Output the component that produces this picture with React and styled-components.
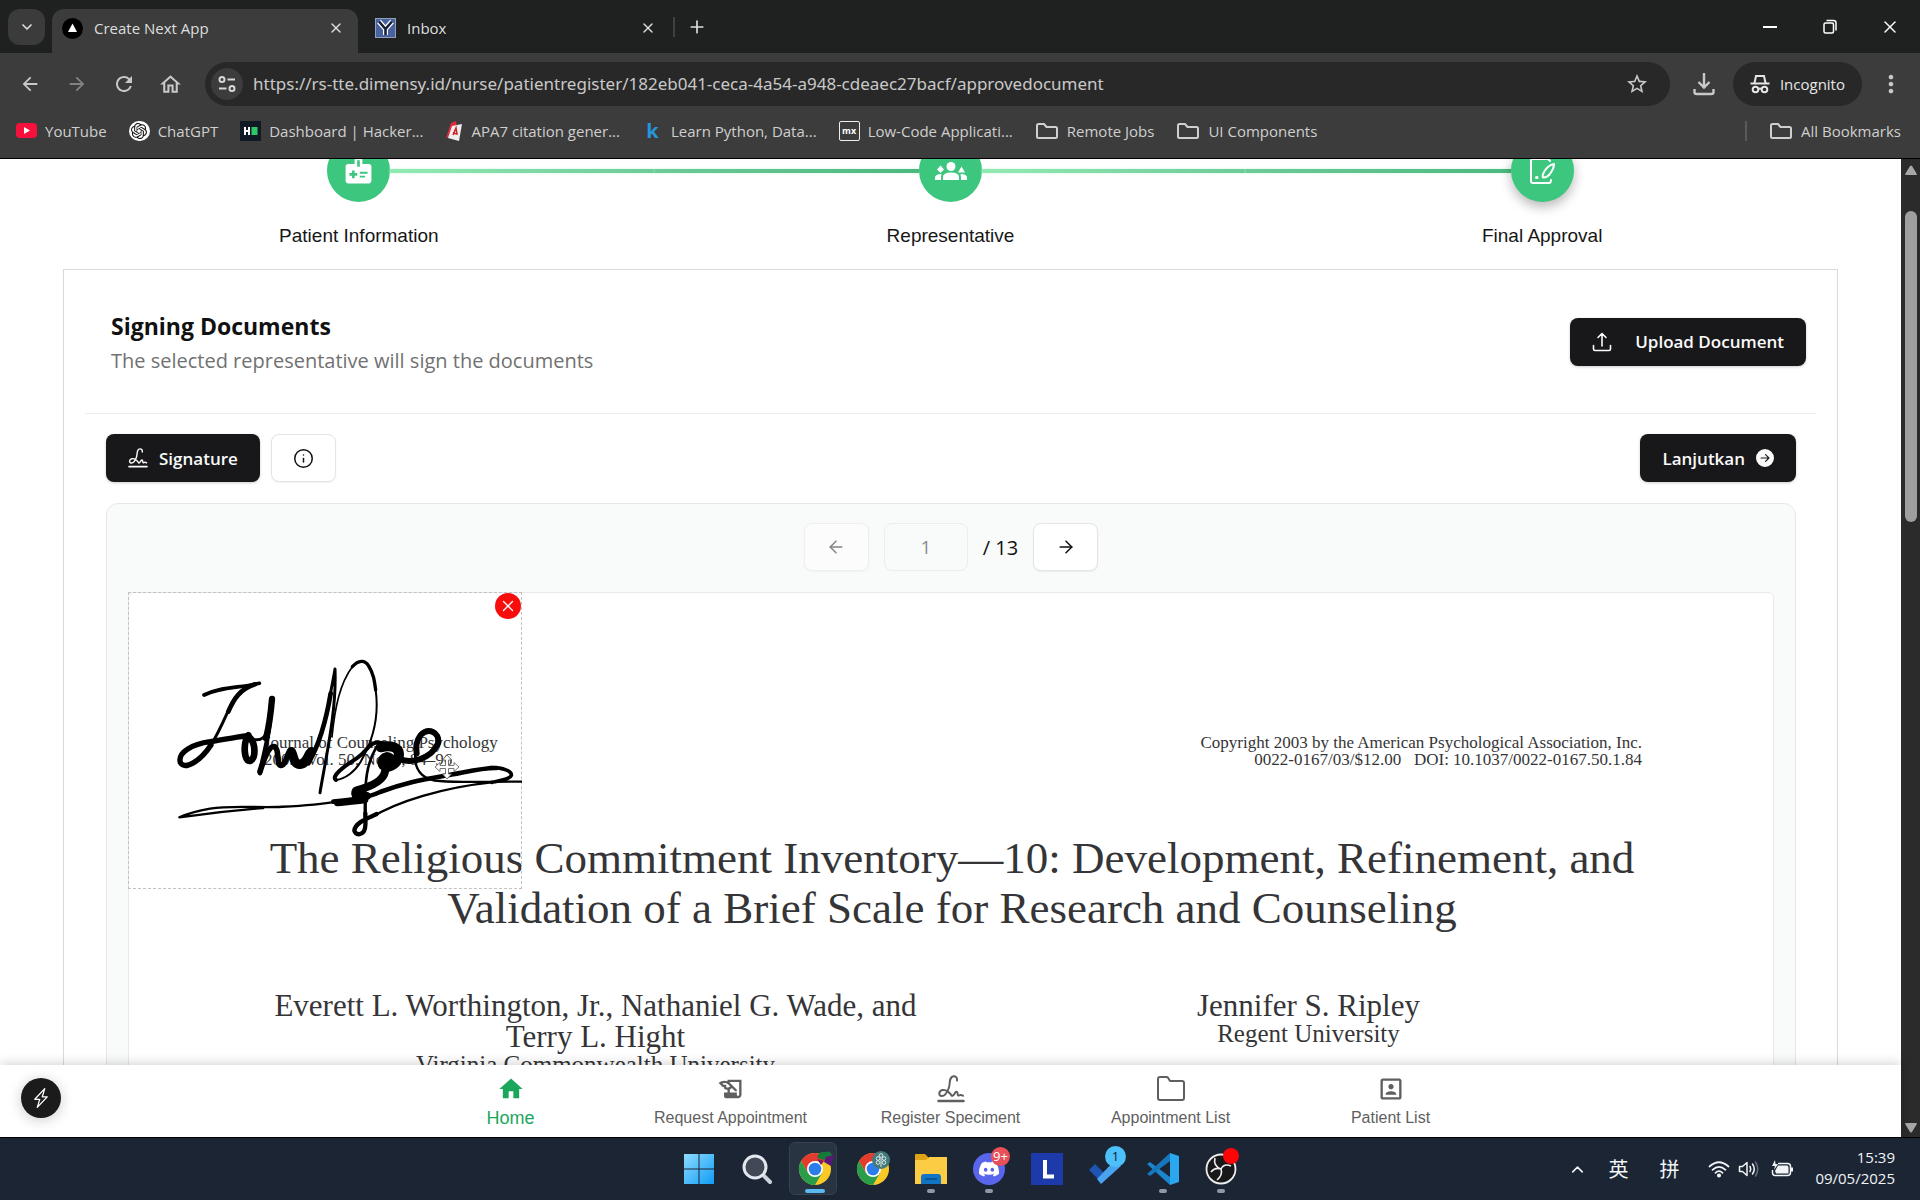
import React from "react";
import styled, { createGlobalStyle, css } from "styled-components";
import {
  MdArrowBack, MdArrowForward, MdRefresh, MdOutlineHome, MdStarBorder, MdMoreVert,
  MdMedicalInformation, MdHome, MdHistoryEdu, MdPortrait,
} from "react-icons/md";
import { BsArrowRightCircleFill, BsLightningCharge } from "react-icons/bs";
import { SiOpenai, SiDiscord } from "react-icons/si";
import { ArrowLeft, ArrowRight, Info, ChevronDown, ChevronUp, X, Plus } from "lucide-react";

const ui = `"Open Sans", "Noto Sans", "Noto Sans CJK SC", sans-serif`;
const arial = `"Liberation Sans", Arial, sans-serif`;
const serif = `"Liberation Serif", "Times New Roman", serif`;

const GlobalStyle = createGlobalStyle`
  *, *::before, *::after { box-sizing: border-box; }
  body { margin: 0; background: #1b2533; font-family: ${ui}; }
  button, input { font: inherit; color: inherit; margin: 0; padding: 0; border: 0; background: none; }
  button { cursor: pointer; }
  a { color: inherit; text-decoration: none; }
  svg { display: block; flex: none; }
  h1, h2, p { margin: 0; font-weight: 400; }
`;

const Screen = styled.div`
  display: flex;
  flex-direction: column;
  height: 100vh;
  overflow: hidden;
`;

/* Browser chrome */

const TabStrip = styled.div`
  display: flex;
  align-items: flex-end;
  height: 53px;
  flex: none;
  padding-left: 8px;
  background: #1f2020;
  color: #dedede;
`;

const TabSearch = styled.button`
  display: grid;
  place-items: center;
  width: 37px;
  height: 36px;
  margin: 0 7px 8px 0;
  border-radius: 12px;
  background: #3b3b3b;
`;

const Tab = styled.div`
  display: flex;
  align-items: center;
  gap: 11px;
  width: ${(p) => (p.$active ? 306 : 315)}px;
  height: 44px;
  padding: 0 ${(p) => (p.$active ? 14 : 17)}px 6px ${(p) => (p.$active ? 10 : 17)}px;
  border-radius: 12px 12px 0 0;
  background: ${(p) => (p.$active ? "#3c3c3c" : "transparent")};
  font-size: 15px;
`;

const TabTitle = styled.span`
  flex: 1;
`;

const StripButton = styled.button`
  display: grid;
  place-items: center;
  width: ${(p) => p.$width || 16}px;
  height: ${(p) => p.$height || 16}px;
`;

const StripRule = styled.span`
  width: 2px;
  height: 20px;
  margin: 0 12px 16px 0;
  background: #3f4141;
`;

const NewTab = styled(StripButton)`
  margin-bottom: 13px;
`;

const WindowControls = styled.div`
  display: flex;
  margin-left: auto;
  align-self: stretch;
`;

const ToolBar = styled.div`
  display: flex;
  align-items: center;
  height: 62px;
  flex: none;
  padding: 0 8px 0 6px;
  background: #3c3c3c;
  color: #c8c8c8;
`;

const ToolButton = styled.button`
  display: grid;
  place-items: center;
  width: ${(p) => p.$width || 47}px;
  height: 40px;
  opacity: ${(p) => (p.$dim ? 0.5 : 1)};
`;

const Address = styled.div`
  display: flex;
  align-items: center;
  flex: 1;
  height: 44px;
  margin: 0 8px 0 11px;
  padding: 0 18px 0 6px;
  border-radius: 22px;
  background: #282828;
`;

const SiteInfo = styled.button`
  display: grid;
  place-items: center;
  width: 32px;
  height: 32px;
  margin-right: 10px;
  border-radius: 50%;
  background: #3c3c3c;
`;

const Url = styled.input`
  flex: 1;
  min-width: 0;
  font-family: "Noto Sans", "Open Sans", sans-serif;
  font-size: 17px;
  line-height: 26px;
`;

const Incognito = styled.button`
  display: flex;
  align-items: center;
  gap: 10px;
  height: 44px;
  padding: 0 17px;
  margin: 0 8px 0 3px;
  border-radius: 22px;
  background: #282828;
  color: #e6e6e6;
  font-size: 15px;
`;

const Bookmarks = styled.nav`
  display: flex;
  align-items: center;
  gap: 22px;
  flex: none;
  height: 44px;
  padding: 0 19px 12px 16px;
  border-bottom: 1px solid #000;
  background: #3c3c3c;
  color: #cfcfcf;
  font-size: 15px;
`;

const Bookmark = styled.a`
  display: flex;
  align-items: center;
  gap: 8px;
  white-space: nowrap;
`;

const BookmarkRule = styled.span`
  width: 2px;
  height: 20px;
  margin-left: auto;
  background: #5a5a5a;
`;

const Tile = styled.span`
  display: grid;
  place-items: center;
  width: 21px;
  height: 20px;
  background: ${(p) => p.$bg || "transparent"};
  border: ${(p) => p.$border || "0"};
  border-radius: ${(p) => p.$radius || 0}px;
  color: ${(p) => p.$color || "#fff"};
  font: 700 ${(p) => p.$size || 10}px/1 ${ui};
`;

/* Page */

const Window = styled.div`
  display: flex;
  flex: 1;
  min-height: 0;
  border-bottom: 1px solid #000;
`;

const Page = styled.div`
  position: relative;
  display: flex;
  flex-direction: column;
  flex: 1;
  min-width: 0;
  background: #fff;
`;

const Scroller = styled.main`
  flex: 1;
  min-height: 0;
  overflow: hidden;
`;

const ScrollBar = styled.div`
  display: flex;
  flex-direction: column;
  align-items: center;
  justify-content: space-between;
  width: 19px;
  padding: 6px 0 4px;
  background: #2b2b2b;
`;

const Track = styled.div`
  flex: 1;
  padding: 35px 0 0 0;
`;

const Thumb = styled.div`
  width: 12px;
  height: 311px;
  border-radius: 6px;
  background: #9f9f9f;
`;

const Stepper = styled.ol`
  display: flex;
  margin: -20px 63px 0;
  padding: 0;
  list-style: none;
`;

const Step = styled.li`
  display: grid;
  grid-template-columns: 1fr 63px 1fr;
  align-items: center;
  flex: 1;
  row-gap: 22px;
`;

const StepLine = styled.span`
  height: 4px;
  background: ${(p) =>
    p.$part === "start" ? "linear-gradient(90deg, #93eab4, #6dcb97)" :
    p.$part === "end" ? "linear-gradient(90deg, #6dcb97, #4cb87e)" : "none"};
  box-shadow: ${(p) => (p.$part ? "0 0 3px #c9f7da" : "none")};
`;

const StepDot = styled.span`
  display: grid;
  place-items: center;
  height: 63px;
  border-radius: 50%;
  background: #3cc67e;
  color: #fff;
  ${(p) => p.$current && css`box-shadow: 0 5px 12px rgba(0, 0, 0, 0.28);`}
`;

const StepLabel = styled.span`
  grid-column: 1 / -1;
  text-align: center;
  font: 19px/24px ${arial};
  color: #161616;
`;

const Card = styled.section`
  margin: 21px 63px 0;
  padding: 0 21px;
  border: 1px solid #dadada;
`;

const CardHeader = styled.header`
  display: flex;
  align-items: center;
  justify-content: space-between;
  height: 144px;
  padding: 0 10px 0 26px;
  border-bottom: 1px solid #ececec;
`;

const CardHeading = styled.div`
  padding-top: 2px;
`;

const CardTitle = styled.h1`
  font-size: 23px;
  font-weight: 700;
  line-height: 36px;
  color: #111;
`;

const CardText = styled.p`
  font-size: 20px;
  line-height: 34px;
  color: #717171;
`;

const CardBody = styled.div`
  padding: 20px 20px 0 21px;
`;

const Actions = styled.div`
  display: flex;
  gap: 11px;
  margin-bottom: 21px;
`;

const Button = styled.button`
  display: flex;
  align-items: center;
  justify-content: center;
  gap: ${(p) => p.$gap || 11}px;
  height: 48px;
  padding: 0 22px;
  border-radius: 8px;
  background: #18181a;
  color: #fafafa;
  font-size: 17px;
  font-weight: 600;
  box-shadow: 0 1px 3px rgba(0, 0, 0, 0.2);
  margin-left: ${(p) => (p.$end ? "auto" : "0")};
`;

const IconButton = styled.button`
  display: grid;
  place-items: center;
  width: 65px;
  height: 48px;
  border: 1px solid #e4e4e4;
  border-radius: 8px;
  background: #fff;
  color: #111;
  box-shadow: 0 1px 2px rgba(0, 0, 0, 0.06);
  &:disabled { opacity: 0.5; }
`;

const Viewer = styled.div`
  padding: 19px 21px 0;
  border: 1px solid #e6e8e8;
  border-radius: 12px 12px 0 0;
  background: #f9fafa;
`;

const Pager = styled.div`
  display: flex;
  align-items: center;
  justify-content: center;
  gap: 15px;
  margin-bottom: 21px;
  font-size: 20px;
  color: #111;
`;

const PageInput = styled.input`
  width: 84px;
  height: 48px;
  border: 1px solid #ededed;
  border-radius: 8px;
  text-align: center;
  font-size: 18px;
  color: #888;
`;

const Paper = styled.article`
  position: relative;
  min-height: 1200px;
  padding: 141px 0 0 2px;
  border: 1px solid #e8eaea;
  border-radius: 6px;
  background: #fff;
  color: #353537;
  font-family: ${serif};
`;

const Masthead = styled.div`
  display: flex;
  justify-content: space-between;
  padding: 0 131px 0 133px;
  font-size: 17px;
  line-height: 17px;
  p:last-child { text-align: right; }
`;

const PaperTitle = styled.h2`
  margin-top: 65px;
  text-align: center;
  font-size: 45px;
  line-height: 50px;
`;

const Authors = styled.div`
  display: grid;
  grid-template-columns: 1fr 1fr;
  margin-top: 57px;
  padding: 0 108px;
  text-align: center;
`;

const AuthorName = styled.p`
  font-size: 31px;
  line-height: 31px;
  white-space: nowrap;
`;

const Affiliation = styled.p`
  font-size: 25px;
  line-height: 26px;
`;

const SignatureBox = styled.div`
  position: absolute;
  top: -1px;
  left: -1px;
  width: 394px;
  height: 297px;
  border: 1px dashed #c2c2c2;
`;

const RemoveSignature = styled.button`
  position: absolute;
  top: 0;
  right: 0;
  display: grid;
  place-items: center;
  width: 26px;
  height: 26px;
  border-radius: 50%;
  background: #f80d0d;
  color: #fff;
`;

const BottomNav = styled.nav`
  position: relative;
  display: flex;
  justify-content: center;
  height: 72px;
  flex: none;
  background: #fff;
  box-shadow: 0 -2px 10px rgba(0, 0, 0, 0.16);
`;

const NavLink = styled.a`
  display: flex;
  flex-direction: column;
  align-items: center;
  gap: 3px;
  width: 220px;
  padding-top: 10px;
  font: ${(p) => (p.$active ? 18 : 16)}px/24px ${arial};
  color: ${(p) => (p.$active ? "#1aa75c" : "#5f5f5f")};
`;

const DevBadge = styled.button`
  position: absolute;
  left: 21px;
  bottom: 19px;
  display: grid;
  place-items: center;
  width: 40px;
  height: 40px;
  border-radius: 50%;
  background: #1b1b1b;
  color: #fff;
  box-shadow: 0 2px 14px rgba(0, 0, 0, 0.2);
`;

/* Taskbar */

const TaskBar = styled.footer`
  display: grid;
  grid-template-columns: 1fr auto 1fr;
  align-items: center;
  flex: none;
  height: 62px;
  background: #1b2534;
  color: #f2f4f6;
`;

const Apps = styled.div`
  grid-column: 2;
  display: flex;
`;

const AppButton = styled.button`
  position: relative;
  display: grid;
  place-items: center;
  width: 58px;
  height: 62px;
  &::before {
    content: "";
    position: absolute;
    inset: 4px 7px 5px 3px;
    border-radius: 6px;
    background: ${(p) => (p.$active ? "#293443" : "none")};
    border: 1px solid ${(p) => (p.$active ? "#354050" : "transparent")};
  }
  &::after {
    content: "";
    position: absolute;
    bottom: 7px;
    left: 50%;
    width: ${(p) => (p.$active ? 20 : 8)}px;
    height: 4px;
    border-radius: 2px;
    transform: translateX(-50%);
    background: ${(p) => (p.$active ? "#5ab9f0" : p.$open ? "#8f99a6" : "none")};
  }
  svg { position: relative; }
`;

const Badge = styled.span`
  position: absolute;
  top: ${(p) => p.$top || 8}px;
  right: ${(p) => p.$right || 6}px;
  display: grid;
  place-items: center;
  width: ${(p) => p.$size || 19}px;
  height: ${(p) => p.$size || 19}px;
  border-radius: 50%;
  background: ${(p) => p.$bg};
  color: ${(p) => p.$color || "#fff"};
  font: 13px/1 ${ui};
`;

const Tray = styled.div`
  display: flex;
  align-items: center;
  justify-content: flex-end;
  padding-right: 25px;
`;

const TrayButton = styled.button`
  display: grid;
  place-items: center;
  width: ${(p) => p.$width}px;
  height: 40px;
  font: 20px/40px "Noto Sans CJK SC", sans-serif;
`;

const Clock = styled.time`
  margin-left: 16px;
  padding-bottom: 2px;
  text-align: right;
  font-size: 15px;
  line-height: 21px;
`;

/* Drawings */

const Folder = ({ size = 24 }) => (
  <svg width={size} height={size} viewBox="0 0 24 24" fill="none" stroke="currentColor" strokeWidth="2" strokeLinejoin="round">
    <path d="M2 6.500Q2 5 3.500 5H9l2.500 3H20.500Q22 8 22 9.500V17.500Q22 19 20.500 19H3.500Q2 19 2 17.500Z" />
  </svg>
);

const NavFolder = () => (
  <svg width="30" height="28" viewBox="0 0 30 28" fill="none" stroke="currentColor" strokeWidth="2" strokeLinejoin="round">
    <path d="M2 4Q2 2 4 2H10.500Q11.500 2 12.200 3L14 6H26Q28 6 28 8V23Q28 25 26 25H4Q2 25 2 23Z" />
  </svg>
);

const SignIcon = ({ size = 28 }) => (
  <svg width={size} height={size} viewBox="0 0 28 28" fill="none" stroke="currentColor" strokeWidth="2" strokeLinecap="round" strokeLinejoin="round">
    <path d="M20 5.500C20.500 2.500 18.500 1 16.500 1.200C11.500 2 13.500 8.500 11.800 13C10 18 7 21.500 4 21C1.500 20 1.500 16 5.500 15C10.500 14.200 13 18 15 21C17.500 21 17.500 16.800 19.500 16.800C21.500 17 19.800 20.800 21.800 20.600C23.500 20.200 23.500 19 26 20.800" />
    <path d="M1.500 26H26.500" strokeWidth="2.500" />
  </svg>
);

const UploadIcon = () => (
  <svg width="20" height="20" viewBox="0 0 20 20" fill="none" stroke="currentColor" strokeWidth="1.600" strokeLinecap="round" strokeLinejoin="round">
    <path d="M10 14V2M6 5.500L10 1.500L14 5.500M1.500 13.500V17Q1.500 18.500 3 18.500H17Q18.500 18.500 18.500 17V13.500" />
  </svg>
);

const GroupIcon = () => (
  <svg width="34" height="34" viewBox="0 0 34 34" fill="currentColor">
    <circle cx="17" cy="12.500" r="4.500" />
    <path d="M9 26V23Q9 18.500 17 18.500Q25 18.500 25 23V26ZM1 26V23.500Q1 20 7.500 20Q7 22 7 26ZM33 26V23.500Q33 20 26.500 20Q27 22 27 26ZM6.500 11.500L10 15.500L6.500 19L3 15.500ZM27.500 12.500L31 18.500H24Z" />
  </svg>
);

const SignPageIcon = () => (
  <svg width="30" height="30" viewBox="0 0 30 30" fill="none" stroke="currentColor" strokeWidth="2" strokeLinecap="round" strokeLinejoin="round">
    <path d="M19 3H6Q4 3 4 5V25Q4 27 6 27H22Q24 27 24 24" />
    <path d="M27 8Q21 9 17 16Q15 19.500 16 21.500Q19 22 22 19Q27 13 27 8ZM20 2L23 5" />
    <path d="M9.500 21.500H10" strokeWidth="3" />
  </svg>
);

const SiteIcon = () => (
  <svg width="18" height="18" viewBox="0 0 18 18" fill="none" stroke="#d8d8d8" strokeWidth="2">
    <circle cx="4" cy="4.500" r="2.500" />
    <path d="M9.500 4.500H17M1 13.500H8.500" />
    <circle cx="14" cy="13.500" r="2.500" />
  </svg>
);

const IncognitoIcon = () => (
  <svg width="20" height="20" viewBox="0 0 20 20" fill="none" stroke="currentColor" strokeWidth="2">
    <path d="M0.500 9.500H19.500M4.500 9L6 2H14L15.500 9" />
    <circle cx="5.500" cy="15.500" r="2.800" />
    <circle cx="14.500" cy="15.500" r="2.800" />
    <path d="M8 15Q10 14 12 15" />
  </svg>
);

const DownloadIcon = () => (
  <svg width="22" height="24" viewBox="0 0 22 24" fill="none" stroke="currentColor" strokeWidth="2.400">
    <path d="M11 1V15M5.500 10L11 15.500L16.500 10M1.500 17V20Q1.500 22 3.500 22H18.500Q20.500 22 20.500 20V17" />
  </svg>
);

const RestoreIcon = () => (
  <svg width="14" height="15" viewBox="0 0 14 15" fill="none" stroke="#fff" strokeWidth="1.500">
    <rect x="1" y="4" width="9.500" height="10" rx="1.500" />
    <path d="M3.500 1.500H10.500Q13 1.500 13 4V11.500" />
  </svg>
);

const NextIcon = () => (
  <svg width="21" height="21" viewBox="0 0 21 21">
    <circle cx="10.500" cy="10.500" r="10.500" fill="#000" />
    <path d="M10.500 5.500L15 14H6Z" fill="#fff" />
  </svg>
);

const YahooIcon = () => (
  <svg width="21" height="20" viewBox="0 0 21 20" fill="none">
    <rect x="0.500" y="0.500" width="20" height="19" fill="#4862a0" stroke="#93a0bd" />
    <path d="M4 3.500L10.500 11L17 3.500M10.500 11V17" stroke="#fff" strokeWidth="5" />
    <path d="M4 3.500L10.500 11L17 3.500M10.500 11V17" stroke="#16203c" strokeWidth="2.600" />
  </svg>
);

const YouTubeIcon = () => (
  <svg width="21" height="15" viewBox="0 0 21 15">
    <rect width="21" height="15" rx="4" fill="#f8103c" />
    <path d="M8 4L14 7.500L8 11Z" fill="#fff" />
  </svg>
);

const CitationIcon = () => (
  <svg width="18" height="20" viewBox="0 0 18 20">
    <path d="M6 2L11 0L13 12L1 17Z" fill="#e02b3c" />
    <path d="M7 5L17 3L14 20L3 17Z" fill="#eee" />
    <path d="M8 14L11 7L12 13L8 12" fill="none" stroke="#c22" strokeWidth="1.500" />
  </svg>
);

const Signature = () => (
  <svg width="393" height="295" viewBox="57 39 1179 885" fill="none" stroke="#000" strokeLinecap="round" strokeLinejoin="round">
    <path strokeWidth="11" d="M282 345C330 320 390 324 448 310" />
    <path strokeWidth="14" d="M435 313C390 328 372 355 355 395" />
    <path strokeWidth="9" d="M358 385C340 425 325 460 303 495" />
    <path strokeWidth="16" d="M303 495C270 545 225 570 211 548C202 515 250 492 300 485C340 478 380 472 415 466" />
    <path strokeWidth="20" d="M415 466C398 490 402 545 420 543C438 535 438 490 418 472" />
    <path strokeWidth="19" d="M486 357C482 405 478 435 468 475" />
    <path strokeWidth="9" d="M430 478C455 485 470 465 470 455" />
    <path strokeWidth="13" d="M480 402C482 460 460 520 450 580" />
    <path strokeWidth="17" d="M450 575C462 535 478 495 494 500C510 510 498 555 512 556C530 555 530 515 544 510" />
    <path strokeWidth="28" d="M544 515C552 530 550 552 570 553C592 550 592 525 604 515" />
    <path strokeWidth="14" d="M595 550C630 490 652 400 662 340" />
    <path strokeWidth="9" d="M660 350C666 310 672 290 675 267C680 390 650 520 630 638" />
    <path strokeWidth="5" d="M666 470C675 380 690 310 727 260" />
    <path strokeWidth="10" d="M727 260C745 240 765 238 776 258C790 280 793 300 797 330" />
    <path strokeWidth="6" d="M797 330C808 410 790 480 752 545C735 575 705 597 678 600" />
    <path strokeWidth="12" d="M678 600C662 590 700 560 740 535C775 512 775 485 810 488C835 490 840 500 870 505" />
    <path strokeWidth="30" d="M812 502C845 494 872 502 866 530C858 558 830 566 820 556C812 545 825 522 840 535" />
    <path strokeWidth="8" d="M800 500C770 550 764 600 765 700" />
    <path strokeWidth="18" d="M868 535C900 555 965 535 984 490C990 455 955 442 932 465C917 485 918 500 920 520" />
    <path strokeWidth="7" d="M916 520C910 580 950 602 990 603C1060 609 1150 604 1238 605" />
    <path strokeWidth="24" d="M825 575C820 605 775 622 738 632C730 645 740 655 770 648" />
    <path strokeWidth="20" d="M682 669C710 666 740 663 765 660" />
    <path strokeWidth="14" d="M670 665C720 660 770 655 810 636C880 610 930 600 1000 588C1070 576 1120 562 1160 564" />
    <path strokeWidth="11" d="M1140 563C1180 562 1206 574 1204 586C1200 598 1170 602 1145 607" />
    <path strokeWidth="7" d="M1145 607C1000 622 860 665 785 712" />
    <path strokeWidth="9" d="M766 660V725" />
    <path strokeWidth="13" d="M800 702C765 718 735 730 733 752C738 768 760 766 765 745C768 730 766 720 766 700" />
    <path strokeWidth="7" d="M680 664C620 676 560 678 500 681C430 683 360 676 300 686C265 692 235 700 208 712C290 700 380 690 460 684" />
  </svg>
);

const MoveCursor = styled.svg`
  position: absolute;
  left: 305px;
  top: 161px;
`;

const ChromeIcon = ({ mark }) => (
  <svg width="40" height="40" viewBox="0 0 40 40">
    <circle cx="20" cy="20" r="16" fill="#fbc926" />
    <path d="M20 12H33.900A16 16 0 0 0 6.100 12L13 24Z" fill="#e33b2e" />
    <path d="M6.100 12A16 16 0 0 0 20 36L27 24L13 24Z" fill="#2a9d4a" />
    <circle cx="20" cy="20" r="8" fill="#fff" />
    <circle cx="20" cy="20" r="6.300" fill="#2b7de9" />
    {mark === "grape" ? (
      <g>
        <path d="M22 8Q24 2 31 3Q36 1 37 7L32 10Q26 12 22 8Z" fill="#157a3a" />
        <path d="M31 8L39 6L36 17L29 13Z" fill="#5b1778" />
        <path d="M22 10L29 12L26 16Z" fill="#7b1c63" />
      </g>
    ) : (
      <g>
        <circle cx="28" cy="11" r="9" fill="#447a7c" />
        <g fill="none" stroke="#dceaea" strokeWidth="1">
          <path d="M28 18V9" />
          <circle cx="28" cy="6.500" r="1.800" />
          <circle cx="25" cy="9.500" r="1.800" />
          <circle cx="31" cy="9.500" r="1.800" />
          <circle cx="25" cy="13.500" r="1.800" />
          <circle cx="31" cy="13.500" r="1.800" />
        </g>
      </g>
    )}
  </svg>
);

const WindowsIcon = () => (
  <svg width="32" height="32" viewBox="0 0 32 32">
    <defs>
      <linearGradient id="win" x1="0" y1="0" x2="1" y2="1">
        <stop offset="0" stopColor="#8fdcff" />
        <stop offset="1" stopColor="#109cf5" />
      </linearGradient>
    </defs>
    <path d="M1 1H15.500V15.500H1ZM16.500 1H31V15.500H16.500ZM1 16.500H15.500V31H1ZM16.500 16.500H31V31H16.500Z" fill="url(#win)" />
  </svg>
);

const SearchIcon = () => (
  <svg width="32" height="32" viewBox="0 0 32 32" fill="none">
    <path d="M22 22L29 29" stroke="#ccd3dc" strokeWidth="4" strokeLinecap="round" />
    <circle cx="14" cy="14" r="11" fill="#414956" stroke="#e3e7ee" strokeWidth="3" />
  </svg>
);

const ExplorerIcon = () => (
  <svg width="34" height="34" viewBox="0 0 34 34">
    <path d="M1 3Q1 2 2 2H11L14 5V10H1Z" fill="#dfa316" />
    <path d="M1 8H12L15 5H33V32H1Z" fill="#fccc45" />
    <path d="M7 32V25Q7 22 10 22H24Q27 22 27 25V32Z" fill="#1174c4" />
    <path d="M11 27H23" stroke="#0b5598" strokeWidth="2" />
  </svg>
);

const DiscordIcon = () => (
  <svg width="34" height="34" viewBox="0 0 34 34">
    <circle cx="17" cy="17" r="16" fill="#5966ec" />
    <g transform="translate(7 7)"><SiDiscord size={20} color="#fff" /></g>
  </svg>
);

const LIcon = () => (
  <svg width="34" height="34" viewBox="0 0 34 34">
    <rect x="1" y="1" width="32" height="32" fill="#1c3aa9" />
    <path d="M15 8V24.500H24" stroke="#fff" strokeWidth="4" fill="none" />
  </svg>
);

const TodoIcon = () => (
  <svg width="36" height="34" viewBox="0 0 36 34">
    <path d="M2 18L8 12L18 22L12 28Z" fill="#1e55b5" />
    <path d="M11 28L29 9L35 15L15 33Z" transform="translate(-1 -1)" fill="#4aa3ee" />
  </svg>
);

const CodeIcon = () => (
  <svg width="34" height="34" viewBox="0 0 34 34">
    <path d="M24 1L33 4V30L24 33Z" fill="#2aa7ee" />
    <path d="M1 12L4 10L24 25V33Z" fill="#1b86cc" />
    <path d="M1 22L4 24L24 9V1Z" fill="#1578bd" />
  </svg>
);

const ObsIcon = () => (
  <svg width="34" height="34" viewBox="0 0 34 34" fill="none" stroke="#eee">
    <circle cx="17" cy="17" r="14.500" fill="#18181a" strokeWidth="1.800" />
    <path strokeWidth="1.600" d="M11 6Q9 14 17 17Q20 11 27 14M17 17Q19 23 13 28M17 17Q11 15 7 20" />
  </svg>
);

const WifiIcon = () => (
  <svg width="22" height="18" viewBox="0 0 22 18" fill="none" stroke="currentColor" strokeWidth="1.700" strokeLinecap="round">
    <path d="M1.500 6.500Q11 -2 20.500 6.500M4.500 9.800Q11 4 17.500 9.800M7.500 12.800Q11 9.500 14.500 12.800" />
    <circle cx="11" cy="15.500" r="1.200" fill="currentColor" />
  </svg>
);

const VolumeIcon = () => (
  <svg width="22" height="18" viewBox="0 0 22 18" fill="none" stroke="currentColor" strokeWidth="1.500" strokeLinejoin="round" strokeLinecap="round">
    <path d="M1.500 6.500H4.500L9 2.500V15.500L4.500 11.500H1.500ZM12 6.500Q13.500 9 12 11.500M14.500 4Q18 9 14.500 14" />
    <path d="M17.500 2Q22 9 17.500 16" opacity="0.350" />
  </svg>
);

const BatteryIcon = () => (
  <svg width="23" height="18" viewBox="0 0 23 18" fill="none" stroke="currentColor" strokeWidth="1.500">
    <path d="M7 3.500H16.500Q19.500 3.500 19.500 6.500V12.500Q19.500 15.500 16.500 15.500H4Q1.500 15.500 1.500 12.500V10" />
    <path d="M7 5.500H16.500L17.500 7V13.500H5L4 11ZM20 7.500H22V11.500H20ZM4 0L1 6H4L3 10L7 4H4.500Z" fill="currentColor" stroke="none" />
  </svg>
);

const Arrow = ({ down }) => (
  <svg width="14" height="11" viewBox="0 0 14 11">
    <path d={down ? "M2 1H12Q13.500 1 12.700 2.300L8 10Q7 11 6 10L1.300 2.300Q0.500 1 2 1Z" : "M2 10H12Q13.500 10 12.700 8.700L8 1Q7 0 6 1L1.300 8.700Q0.500 10 2 10Z"} fill="#a6a6a6" />
  </svg>
);

const steps = [
  { label: "Patient Information", icon: <MdMedicalInformation size={31} />, before: null, after: "start" },
  { label: "Representative", icon: <GroupIcon />, before: "end", after: "start" },
  { label: "Final Approval", icon: <SignPageIcon />, before: "end", after: null, current: true },
];

const bookmarks = [
  { label: "YouTube", icon: <YouTubeIcon /> },
  { label: "ChatGPT", icon: <Tile $bg="#fff" $radius={10} $color="#111"><SiOpenai size={16} /></Tile> },
  { label: "Dashboard | Hacker...", icon: <Tile $bg="#0f1a24" $size={9}><svg width="14" height="8" viewBox="0 0 14 8"><path d="M1 0V8M5 0V8M1 4H5" stroke="#fff" strokeWidth="2" /><rect x="7.500" width="6" height="8" fill="#2ec866" /></svg></Tile> },
  { label: "APA7 citation gener...", icon: <CitationIcon /> },
  { label: "Learn Python, Data...", icon: <Tile $color="#2596d8" $size={20}>k</Tile> },
  { label: "Low-Code Applicati...", icon: <Tile $border="1px solid #eee" $radius={2} $size={9}>mx</Tile> },
  { label: "Remote Jobs", icon: <Folder /> },
  { label: "UI Components", icon: <Folder /> },
];

const links = [
  { label: "Home", icon: <MdHome size={28} />, active: true },
  { label: "Request Appointment", icon: <MdHistoryEdu size={28} /> },
  { label: "Register Speciment", icon: <SignIcon /> },
  { label: "Appointment List", icon: <NavFolder /> },
  { label: "Patient List", icon: <MdPortrait size={28} /> },
];

const apps = [
  { name: "Start", icon: <WindowsIcon /> },
  { name: "Search", icon: <SearchIcon /> },
  { name: "Chrome", icon: <ChromeIcon mark="grape" />, active: true },
  { name: "Chrome profile", icon: <ChromeIcon mark="leaf" /> },
  { name: "File Explorer", icon: <ExplorerIcon />, open: true },
  { name: "Discord", icon: <DiscordIcon />, open: true, badge: <Badge $bg="#e8505a" $right={8} $top={9}>9+</Badge> },
  { name: "L", icon: <LIcon /> },
  { name: "To Do", icon: <TodoIcon />, badge: <Badge $bg="#4cc0fb" $color="#123" $size={21} $right={8} $top={8}>1</Badge> },
  { name: "Visual Studio Code", icon: <CodeIcon />, open: true },
  { name: "OBS", icon: <ObsIcon />, open: true, badge: <Badge $bg="#fb0606" $size={16} $right={11} $top={10} /> },
];

export default function App() {
  return (
    <Screen>
      <GlobalStyle />
      <TabStrip>
        <TabSearch aria-label="Search tabs"><ChevronDown size={16} strokeWidth={2.500} /></TabSearch>
        <Tab $active>
          <NextIcon />
          <TabTitle>Create Next App</TabTitle>
          <StripButton aria-label="Close tab"><X size={16} /></StripButton>
        </Tab>
        <Tab>
          <YahooIcon />
          <TabTitle>Inbox</TabTitle>
          <StripButton aria-label="Close tab"><X size={16} /></StripButton>
        </Tab>
        <StripRule />
        <NewTab $width={20} $height={26} aria-label="New tab"><Plus size={20} /></NewTab>
        <WindowControls>
          <StripButton $width={60} $height={53} aria-label="Minimize">
            <svg width="14" height="2"><rect width="14" height="2" fill="#fff" /></svg>
          </StripButton>
          <StripButton $width={60} $height={53} aria-label="Restore"><RestoreIcon /></StripButton>
          <StripButton $width={60} $height={53} aria-label="Close"><X size={20} strokeWidth={1.700} color="#fff" /></StripButton>
        </WindowControls>
      </TabStrip>

      <ToolBar>
        <ToolButton aria-label="Back"><MdArrowBack size={22} /></ToolButton>
        <ToolButton $dim aria-label="Forward"><MdArrowForward size={22} /></ToolButton>
        <ToolButton aria-label="Reload"><MdRefresh size={24} /></ToolButton>
        <ToolButton aria-label="Home page"><MdOutlineHome size={25} /></ToolButton>
        <Address>
          <SiteInfo aria-label="Site information"><SiteIcon /></SiteInfo>
          <Url type="text" aria-label="Address" defaultValue="https://rs-tte.dimensy.id/nurse/patientregister/182eb041-ceca-4a54-a948-cdeaec27bacf/approvedocument" />
          <ToolButton $width={30} aria-label="Bookmark"><MdStarBorder size={24} /></ToolButton>
        </Address>
        <ToolButton $width={52} aria-label="Downloads"><DownloadIcon /></ToolButton>
        <Incognito><IncognitoIcon />Incognito</Incognito>
        <ToolButton $width={42} aria-label="Menu"><MdMoreVert size={28} /></ToolButton>
      </ToolBar>

      <Bookmarks aria-label="Bookmarks">
        {bookmarks.map((b) => (
          <Bookmark href="#" key={b.label}>{b.icon}{b.label}</Bookmark>
        ))}
        <BookmarkRule />
        <Bookmark href="#"><Folder />All Bookmarks</Bookmark>
      </Bookmarks>

      <Window>
        <Page>
          <Scroller>
            <Stepper>
              {steps.map((s) => (
                <Step key={s.label}>
                  <StepLine $part={s.before} />
                  <StepDot $current={s.current}>{s.icon}</StepDot>
                  <StepLine $part={s.after} />
                  <StepLabel>{s.label}</StepLabel>
                </Step>
              ))}
            </Stepper>

            <Card>
              <CardHeader>
                <CardHeading>
                  <CardTitle>Signing Documents</CardTitle>
                  <CardText>The selected representative will sign the documents</CardText>
                </CardHeading>
                <Button $gap={23}><UploadIcon />Upload Document</Button>
              </CardHeader>
              <CardBody>
                <Actions>
                  <Button><SignIcon size={20} />Signature</Button>
                  <IconButton aria-label="Information"><Info size={21} strokeWidth={1.700} /></IconButton>
                  <Button $end>Lanjutkan<BsArrowRightCircleFill size={18} /></Button>
                </Actions>
                <Viewer>
                  <Pager>
                    <IconButton disabled aria-label="Previous page"><ArrowLeft size={20} strokeWidth={1.800} /></IconButton>
                    <PageInput type="text" aria-label="Page number" defaultValue="1" disabled />
                    <span>/ 13</span>
                    <IconButton aria-label="Next page"><ArrowRight size={20} strokeWidth={1.800} /></IconButton>
                  </Pager>
                  <Paper>
                    <Masthead>
                      <p>Journal of Counseling Psychology<br />2003, Vol. 50, No. 1, 84–96</p>
                      <p>Copyright 2003 by the American Psychological Association, Inc.<br />0022-0167/03/$12.00&nbsp;&nbsp;&nbsp;DOI: 10.1037/0022-0167.50.1.84</p>
                    </Masthead>
                    <PaperTitle>
                      The Religious Commitment Inventory—10: Development, Refinement, and<br />
                      Validation of a Brief Scale for Research and Counseling
                    </PaperTitle>
                    <Authors>
                      <div>
                        <AuthorName>Everett L. Worthington, Jr., Nathaniel G. Wade, and<br />Terry L. Hight</AuthorName>
                        <Affiliation>Virginia Commonwealth University</Affiliation>
                      </div>
                      <div>
                        <AuthorName>Jennifer S. Ripley</AuthorName>
                        <Affiliation>Regent University</Affiliation>
                      </div>
                    </Authors>
                    <SignatureBox>
                      <Signature />
                      <MoveCursor width="26" height="26" viewBox="0 0 26 26">
                        <path d="M13 1L17.500 6H14.500V11.500H20V8.500L25 13L20 17.500V14.500H14.500V20H17.500L13 25L8.500 20H11.500V14.500H6V17.500L1 13L6 8.500V11.500H11.500V6H8.500Z" fill="#fff" stroke="#555" strokeWidth="0.800" />
                      </MoveCursor>
                      <RemoveSignature aria-label="Remove signature"><X size={18} strokeWidth={1.700} /></RemoveSignature>
                    </SignatureBox>
                  </Paper>
                </Viewer>
              </CardBody>
            </Card>
          </Scroller>

          <BottomNav>
            {links.map((l) => (
              <NavLink href="#" key={l.label} $active={l.active}>{l.icon}{l.label}</NavLink>
            ))}
          </BottomNav>
          <DevBadge aria-label="Developer tools"><BsLightningCharge size={20} /></DevBadge>
        </Page>
        <ScrollBar>
          <Arrow />
          <Track><Thumb /></Track>
          <Arrow down />
        </ScrollBar>
      </Window>

      <TaskBar>
        <Apps>
          {apps.map((a) => (
            <AppButton key={a.name} aria-label={a.name} $active={a.active} $open={a.open}>{a.icon}{a.badge}</AppButton>
          ))}
        </Apps>
        <Tray>
          <TrayButton $width={52} aria-label="Hidden icons"><ChevronUp size={19} /></TrayButton>
          <TrayButton $width={30}>英</TrayButton>
          <TrayButton $width={72}>拼</TrayButton>
          <TrayButton $width={28} aria-label="Network"><WifiIcon /></TrayButton>
          <TrayButton $width={32} aria-label="Volume"><VolumeIcon /></TrayButton>
          <TrayButton $width={34} aria-label="Battery"><BatteryIcon /></TrayButton>
          <Clock>15:39<br />09/05/2025</Clock>
        </Tray>
      </TaskBar>
    </Screen>
  );
}
